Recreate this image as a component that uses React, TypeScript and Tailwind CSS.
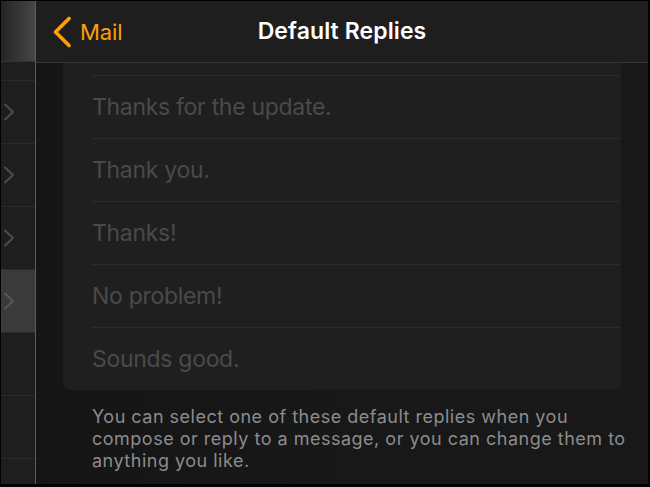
const replies = [
  "Thanks for the update.",
  "Thank you.",
  "Thanks!",
  "No problem!",
  "Sounds good.",
];

// sidebar rows: a chevron where the mail settings list had one
const sideRows = [
  { chevron: true, active: false },
  { chevron: true, active: false },
  { chevron: true, active: false },
  { chevron: true, active: true },
  { chevron: false, active: false },
  { chevron: false, active: false },
];

const Sidebar = () => {
  return (
    <aside className="w-[35px] shrink-0 flex flex-col border-r border-[#5c5c5c] bg-[#1e1e1e]">
      <div className="h-[61px] shrink-0 border-b border-[#333] bg-gradient-to-r from-[#242424] to-[#474747]" />
      <div className="h-[19px] shrink-0 border-b border-[#2b2b2b]" />
      {sideRows.map((row, i) => (
        <div
          key={i}
          className={`h-[63px] shrink-0 flex items-center border-b border-[#2b2b2b] ${
            row.active ? "bg-[#3a3a3a]" : ""
          }`}
        >
          {row.chevron && (
            <svg
              width="12"
              height="18"
              viewBox="0 0 12 18"
              className={`ml-[2px] ${row.active ? "text-[#565656]" : "text-[#4c4c4c]"}`}
            >
              <polyline
                points="2,1.5 10,9 2,16.5"
                fill="none"
                stroke="currentColor"
                strokeWidth="2"
                strokeLinecap="round"
                strokeLinejoin="round"
              />
            </svg>
          )}
        </div>
      ))}
    </aside>
  );
};

const App = () => {
  return (
    <div
      className="w-[650px] h-[487px] overflow-hidden bg-black pt-px pl-px pr-[2px] pb-[3px] flex"
      style={{ fontFamily: "Inter, 'Noto Sans', sans-serif" }}
    >
      <Sidebar />
      <main className="flex-1 min-w-0 flex flex-col bg-[#181818] overflow-hidden">
        <header className="h-[62px] shrink-0 relative flex items-center justify-center bg-[#1e1e1e] border-b border-[#353535]">
          <button className="absolute left-[16px] top-[15px] flex items-center text-[#ff9f0a]">
            <svg width="20" height="32" viewBox="0 0 20 32">
              <polyline
                points="17,2.5 3.5,16 17,29.5"
                fill="none"
                stroke="currentColor"
                strokeWidth="3.6"
                strokeLinecap="round"
                strokeLinejoin="round"
              />
            </svg>
            <span className="ml-[8px] text-[22px] leading-none tracking-[-0.1px]">Mail</span>
          </button>
          <h1 className="text-white text-[23px] font-semibold tracking-[0.1px] leading-none">
            Default Replies
          </h1>
        </header>

        <div className="flex-1 flex bg-gradient-to-r from-[#151515] via-[#181818] to-[#181818]">
          <div className="flex-1 min-w-0 pl-[27px] pr-[27px]">
            <div className="bg-[#1f1f1f] rounded-b-[7px] pl-[29px]">
              <div className="h-[12px]" />
              {replies.map((text) => (
                <div
                  key={text}
                  className="h-[63px] flex items-center border-t border-[#2c2c2c] text-[23px] text-[#4a4a4a] tracking-[-0.3px]"
                >
                  {text}
                </div>
              ))}
            </div>
            <p className="mt-[16px] ml-[29px] w-[540px] text-[18px] leading-[22px] text-[#8c8c8c] tracking-[0.5px]">
              You can select one of these default replies when you compose or reply to a
              message, or you can change them to anything you like.
            </p>
          </div>
        </div>
      </main>
    </div>
  );
};

export default App;
